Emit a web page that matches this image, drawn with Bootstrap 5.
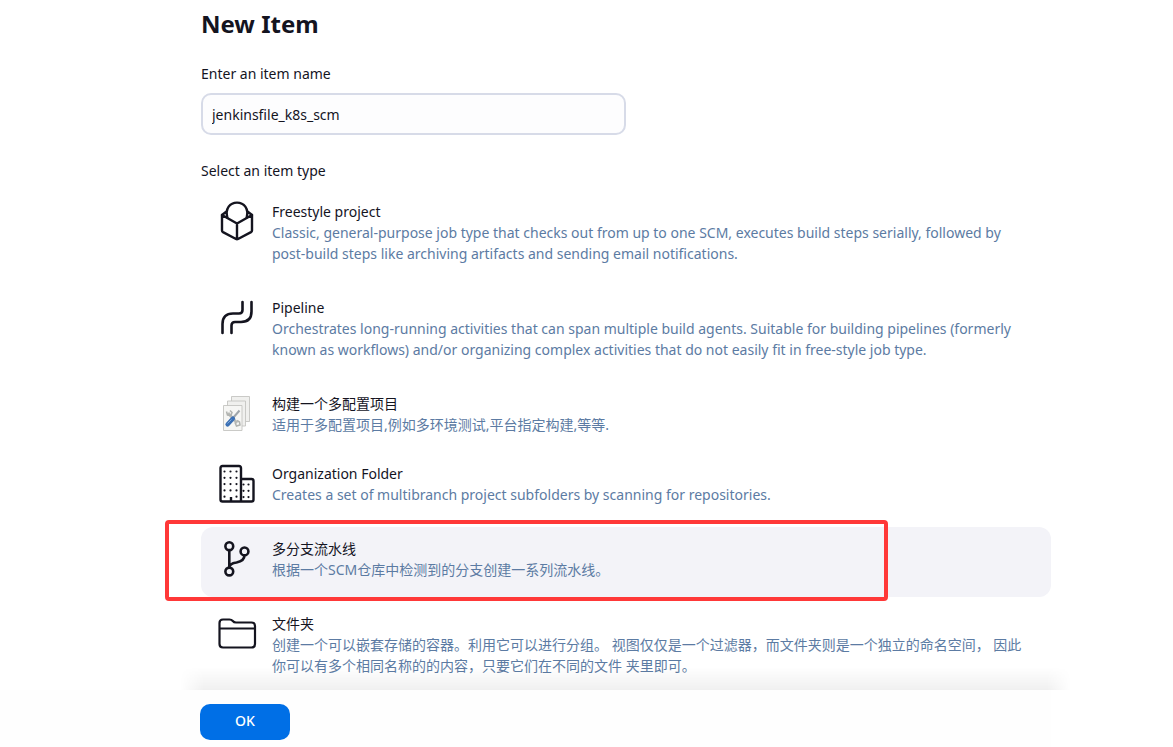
<!DOCTYPE html>
<html lang="zh-CN">
<head>
<meta charset="utf-8">
<meta name="viewport" content="width=device-width, initial-scale=1">
<title>New Item</title>
<link rel="stylesheet" href="https://cdn.jsdelivr.net/npm/bootstrap@5.3.0/dist/css/bootstrap.min.css">
<style>
  :root { --ink: #14141f; --muted: #5c7ba3; --accent: #006fe6; }
  body { font-family: "Noto Sans", "Noto Sans CJK SC", sans-serif; font-size: 14px; line-height: 21px; color: var(--ink); background: #fff; }
  .page { max-width: 1051px; padding-left: 201px; }
  .page-title { font-size: 24px; line-height: 32px; font-weight: 700; padding-top: 8px; margin-bottom: 23px; }
  .name-label { margin-bottom: 9px; }
  .name-input { max-width: 425px; height: 42px; border: 2px solid #d7dbe8; border-radius: 10px; background: #fdfdfe; color: var(--ink); font-size: 14px; padding: 0 9px; }
  .type-group { margin-top: 25px; }
  .type-legend { font-size: 14px; line-height: 21px; margin-bottom: 9px; }
  .type-list { gap: 5px; }
  .item-row { padding: 11px 20px 17px 16px; border-radius: 12px; gap: 15px; cursor: pointer; }
  .item-row.compact { padding-bottom: 12px; }
  .item-row svg { width: 40px; height: 40px; flex: none; color: var(--ink); }
  .btn-check:checked + .item-row { background: #f3f3f8; }
  .item-desc { color: var(--muted); }
  .highlight { position: absolute; top: -7px; bottom: -4px; left: -36px; right: 163px; border: 4px solid #ff3838; border-radius: 4px; pointer-events: none; }
  .footer-bar { background: #fefefe; padding-top: 14px; padding-bottom: 7px; }
  .footer-bar::before { content: ""; position: absolute; left: 180px; right: -20px; top: -23px; height: 23px; pointer-events: none;
    background: linear-gradient(rgba(0,0,0,0), rgba(0,0,0,.06));
    -webkit-mask-image: linear-gradient(90deg, transparent, #000 24px, #000 calc(100% - 24px), transparent); }
  .ok-btn { width: 90px; height: 36px; margin-left: -1px; border-radius: 10px; background: var(--accent); color: #fff; font-size: 14px; font-weight: 500; line-height: 34px; padding: 0 0 2px; }
  .ok-btn:hover { background: #0062cc; color: #fff; }
</style>
</head>
<body>
<form class="d-flex flex-column min-vh-100" onsubmit="return false">
  <main class="page w-100">
    <h1 class="page-title">New Item</h1>
    <label for="name" class="d-block name-label">Enter an item name</label>
    <input id="name" type="text" class="form-control name-input shadow-none" value="jenkinsfile_k8s_scm">

    <fieldset class="type-group">
      <legend class="type-legend">Select an item type</legend>
      <div class="type-list d-flex flex-column">

        <div>
          <input class="btn-check" type="radio" name="mode" id="freestyle">
          <label class="item-row d-flex" for="freestyle">
            <svg viewBox="0 0 40 40" fill="none" stroke="currentColor" stroke-width="2.4" stroke-linejoin="round" stroke-linecap="round"><path d="M20 22.500 35 14v15.500q0 1-1 1.600L21 38q-1 .6-2 0L6 31.100q-1-.6-1-1.600V14zM20 22.500v15"/><path d="M10.300 16.500C8 7.500 13 1.600 20 1.600S32 7.500 29.700 16.500M5 14l4.500-3.500M35 14l-4.500-3.500"/></svg>
            <span><span class="d-block">Freestyle project</span><span class="d-block item-desc">Classic, general-purpose job type that checks out from up to one SCM, executes build steps serially, followed by post-build steps like archiving artifacts and sending email notifications.</span></span>
          </label>
        </div>

        <div>
          <input class="btn-check" type="radio" name="mode" id="pipeline">
          <label class="item-row d-flex" for="pipeline">
            <svg viewBox="0 0 40 40" fill="none" stroke="currentColor" stroke-width="2.6" stroke-linecap="round"><path d="M25.500 5v8q0 3.500-3.500 3.500h-6q-10.500 0-10.500 10.500v9M34.500 5v9.500q0 10.500-10.500 10.500h-6q-3.500 0-3.500 3.500v7.500"/></svg>
            <span><span class="d-block">Pipeline</span><span class="d-block item-desc">Orchestrates long-running activities that can span multiple build agents. Suitable for building pipelines (formerly known as workflows) and/or organizing complex activities that do not easily fit in free-style job type.</span></span>
          </label>
        </div>

        <div>
          <input class="btn-check" type="radio" name="mode" id="matrix">
          <label class="item-row compact d-flex" for="matrix">
            <svg viewBox="0 0 40 40"><g fill="#f0f0ee" stroke="#c4c4c1" stroke-width=".9"><path d="M14.500 3.500h18v25h-18z"/><path d="M10.500 8h18v25h-18z"/><path fill="#f6f6f4" d="M6.500 12.500h18.500v25H6.500z"/></g><path d="M11 20l9 10" stroke="#b9bbb8" stroke-width="2.800"/><path d="M9.500 18.500l1 3.500 3.500.5 1-3-2-2M18 29.500l1.500 3.500 3.500-1-.5-3-2.500-1.500" fill="none" stroke="#b0b2af" stroke-width="1.500"/><path d="M16 25l6.500-7.500" stroke="#9fa5aa" stroke-width="2"/><path d="M10.500 31.500l5.500-6" stroke="#3b70b5" stroke-width="4.200" stroke-linecap="round"/><path d="M10.500 30.500l4-4" stroke="#7ea6d8" stroke-width="1"/></svg>
            <span><span class="d-block">构建一个多配置项目</span><span class="d-block item-desc">适用于多配置项目,例如多环境测试,平台指定构建,等等.</span></span>
          </label>
        </div>

        <div>
          <input class="btn-check" type="radio" name="mode" id="org">
          <label class="item-row d-flex" for="org">
            <svg viewBox="0 0 40 40" fill="none" stroke="currentColor" stroke-width="2.400" stroke-linejoin="round"><path d="M24 38.500V5q0-2-2-2H5.500q-2 0-2 2v31.500q0 2 2 2h29q2 0 2-2V18q0-2-2-2H24"/><path d="M14 38v-4" stroke-width="2.400"/><g stroke-width="2.200" stroke-linecap="round"><path stroke-dasharray="0 6.300" d="M7.500 8.500v26M13.500 8.500v20M19.500 8.500v26M26.500 21.500v14M31.500 21.500v14"/></g></svg>
            <span><span class="d-block">Organization Folder</span><span class="d-block item-desc">Creates a set of multibranch project subfolders by scanning for repositories.</span></span>
          </label>
        </div>

        <div class="position-relative">
          <input class="btn-check" type="radio" name="mode" id="multibranch" checked>
          <label class="item-row d-flex" for="multibranch">
            <svg viewBox="0 0 40 40" fill="none" stroke="currentColor" stroke-width="2.600"><circle cx="12.300" cy="8.200" r="3.900"/><circle cx="12.300" cy="33.500" r="3.900"/><circle cx="27.500" cy="13.400" r="3.900"/><path d="M12.300 12v17.500M27.500 17.300c0 5-4 6.500-8 7.200-4 .6-7.200 1.800-7.200 5"/></svg>
            <span><span class="d-block">多分支流水线</span><span class="d-block item-desc">根据一个SCM仓库中检测到的分支创建一系列流水线。</span></span>
          </label>
          <div class="highlight"></div>
        </div>

        <div>
          <input class="btn-check" type="radio" name="mode" id="folder">
          <label class="item-row compact d-flex" for="folder">
            <svg viewBox="0 0 40 40" fill="none" stroke="currentColor" stroke-width="2.200" stroke-linejoin="round"><path d="M2.500 31V10q0-3.500 3.500-3.500h6.500q2 0 3 1.200Q17 9.500 19 9.500H34.500q3.500 0 3.500 3.500v18q0 3.500-3.500 3.500H6q-3.500 0-3.500-3.500zM2.500 15.500h35.500"/></svg>
            <span><span class="d-block">文件夹</span><span class="d-block item-desc">创建一个可以嵌套存储的容器。利用它可以进行分组。 视图仅仅是一个过滤器，而文件夹则是一个独立的命名空间， 因此你可以有多个相同名称的的内容，只要它们在不同的文件 夹里即可。</span></span>
          </label>
        </div>
      </div>
    </fieldset>
  </main>

  <footer class="page footer-bar w-100 mt-auto sticky-bottom">
    <button type="submit" class="btn border-0 ok-btn">OK</button>
  </footer>
</form>
<script src="https://cdn.jsdelivr.net/npm/bootstrap@5.3.0/dist/js/bootstrap.bundle.min.js"></script>
</body>
</html>
